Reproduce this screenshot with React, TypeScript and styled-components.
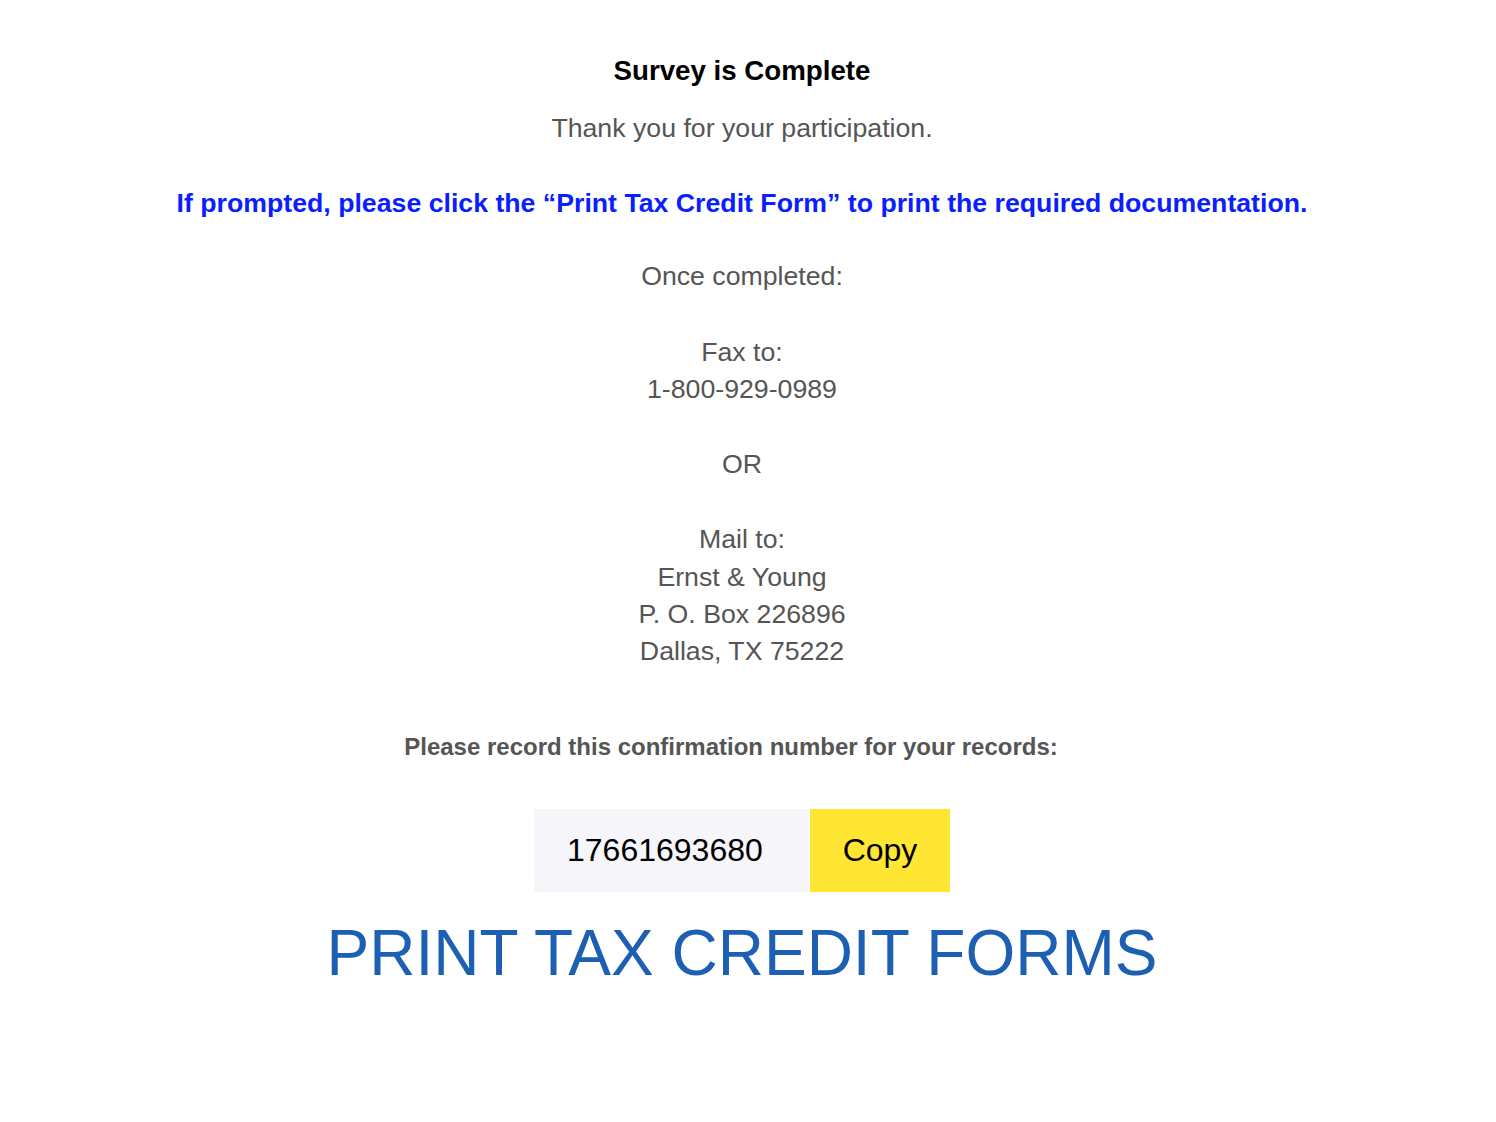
import { createGlobalStyle, styled } from 'styled-components';

const GlobalStyle = createGlobalStyle`
  html, body {
    margin: 0;
    padding: 0;
    background: #fff;
  }
  body {
    font-family: "Liberation Sans", Arial, sans-serif;
  }
`;

const Page = styled.div`
  display: flex;
  flex-direction: column;
  align-items: center;
  padding: 53px 12px 0 0;
  text-align: center;
`;

const Title = styled.h1`
  margin: 0;
  font-size: 27.7px;
  line-height: 36px;
  font-weight: 700;
  color: #000;
`;

const Text = styled.p<{ $gap?: number }>`
  margin: ${(p) => p.$gap ?? 38}px 0 0;
  font-size: 26.7px;
  line-height: 37.3px;
  color: #555;
`;

const Notice = styled.p`
  margin: 38px 0 0;
  font-size: 26.7px;
  line-height: 37px;
  font-weight: 700;
  color: #0a1eff;
`;

const RecordLabel = styled.p`
  margin: 61px 22px 0 0;
  font-size: 24px;
  line-height: 30px;
  font-weight: 700;
  color: #555;
`;

const CopyRow = styled.div`
  display: flex;
  margin-top: 47px;
  height: 83px;
`;

const NumberField = styled.div`
  width: 275px;
  box-sizing: border-box;
  padding-left: 33px;
  display: flex;
  align-items: center;
  background: #f5f5fa;
  font-size: 32px;
  color: #000;
`;

const CopyButton = styled.button`
  width: 140px;
  margin-left: 1px;
  border: none;
  background: #ffe633;
  font-family: inherit;
  font-size: 32px;
  color: #000;
  cursor: pointer;
`;

const PrintLink = styled.a`
  margin-top: 22px;
  font-size: 64px;
  line-height: 78px;
  color: #1c5fb3;
  text-decoration: none;
  cursor: pointer;
`;

export default function App() {
  return (
    <>
      <GlobalStyle />
      <Page>
        <Title>Survey is Complete</Title>
        <Text $gap={21}>Thank you for your participation.</Text>
        <Notice>If prompted, please click the “Print Tax Credit Form” to print the required documentation.</Notice>
        <Text $gap={36}>Once completed:</Text>
        <Text>
          Fax to:
          <br />
          1-800-929-0989
        </Text>
        <Text>OR</Text>
        <Text>
          Mail to:
          <br />
          Ernst &amp; Young
          <br />
          P. O. Box 226896
          <br />
          Dallas, TX 75222
        </Text>
        <RecordLabel>Please record this confirmation number for your records:</RecordLabel>
        <CopyRow>
          <NumberField>17661693680</NumberField>
          <CopyButton>Copy</CopyButton>
        </CopyRow>
        <PrintLink>PRINT TAX CREDIT FORMS</PrintLink>
      </Page>
    </>
  );
}
